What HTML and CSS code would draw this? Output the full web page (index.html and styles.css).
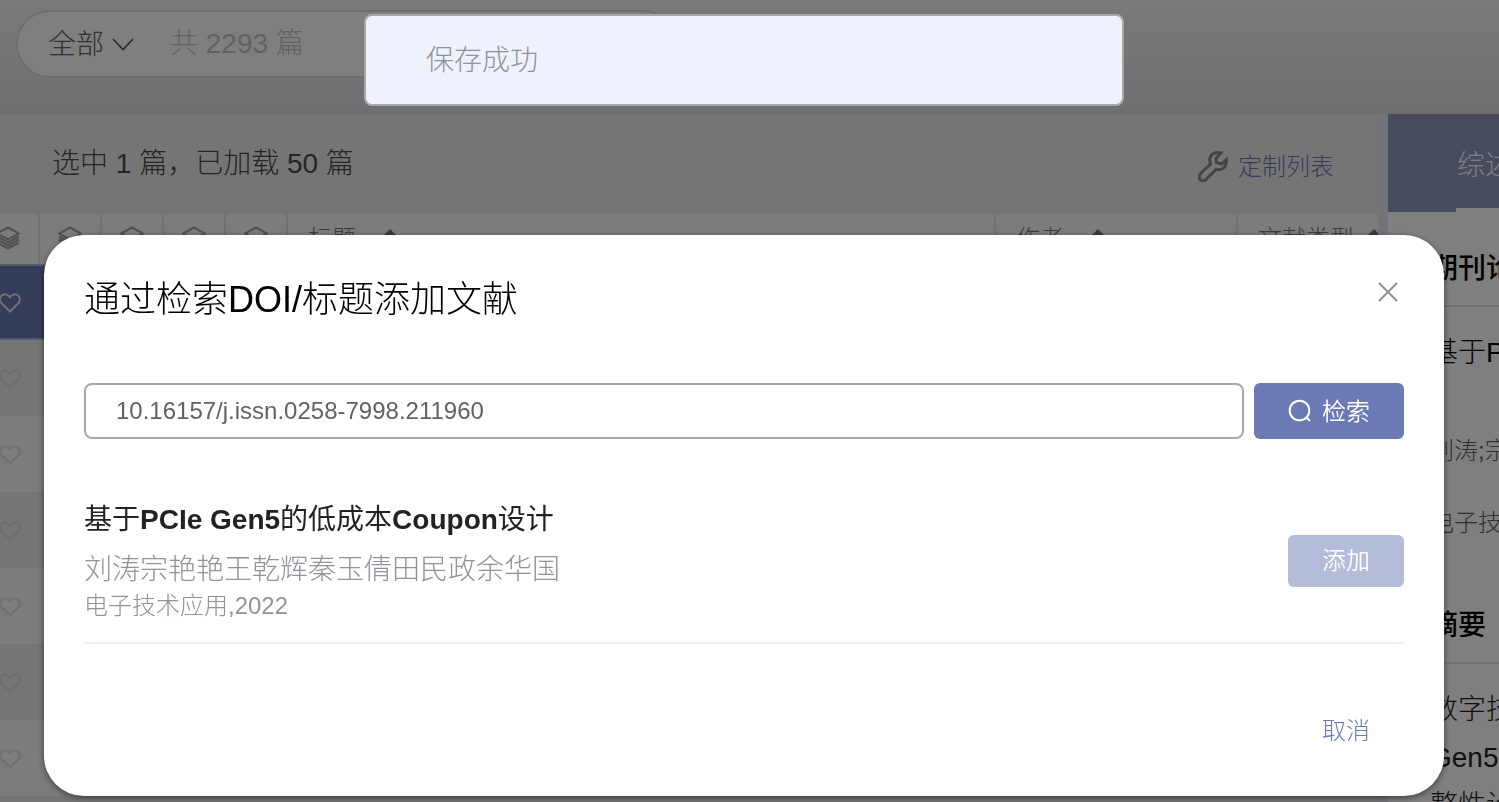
FILE: index.html
```html
<!DOCTYPE html>
<html lang="zh-CN">
<head>
    <meta charset="UTF-8">
    <meta name="viewport" content="width=device-width, initial-scale=1.0">
    <title>添加文献</title>
    <link rel="stylesheet" href="styles.css">
</head>
<body>
    <svg class="symbols" aria-hidden="true">
        <symbol id="layers" viewBox="0 0 24 24">
            <path d="M12 1.5L23 7.5L12 13.5L1 7.5Z" />
            <path d="M1 10.5L12 16.5L23 10.5M1 13.5L12 19.5L23 13.5M1 16.5L12 22.5L23 16.5" />
        </symbol>
        <symbol id="heart" viewBox="0 0 22 20">
            <path d="M11 18.5L2.6 10.2C0.4 7.8 0.6 4.6 2.6 2.7C4.8 0.7 8.2 1 10 3.2L11 4.4L12 3.2C13.8 1 17.2 0.7 19.4 2.7C21.4 4.6 21.6 7.8 19.4 10.2Z" />
        </symbol>
    </svg>

    <header class="top-bar">
        <div class="search-pill">
            <label class="scope">
                <select aria-label="范围">
                    <option>全部</option>
                </select>
                <svg class="chevron" viewBox="0 0 22 13"><path d="M1 1L11 11.5L21 1" /></svg>
            </label>
            <input type="text" class="pill-input" aria-label="搜索" placeholder="共 2293 篇">
        </div>
    </header>

    <main class="content">
        <section class="list">
            <div class="toolbar">
                <span>选中 1 篇，已加载 50 篇</span>
                <a href="#" class="customize">
                    <svg class="wrench" viewBox="0 0 30 31">
                        <path d="M19 1.5C13 2 10.500 7 12.500 13L2.500 22.500C0.500 25 1 27.500 2.500 29C4.500 30.500 6.500 30 8 28.500L18 18.500C24 20 29 16 28.500 8.500L23.500 13L18.500 11.500L18 7.500L23 2Z" />
                    </svg>
                    定制列表
                </a>
            </div>
            <table class="papers">
                <thead>
                    <tr>
                        <th class="icon-col"><svg class="layers"><use href="#layers" /></svg></th>
                        <th class="icon-col"><svg class="layers"><use href="#layers" /></svg></th>
                        <th class="icon-col"><svg class="layers"><use href="#layers" /></svg></th>
                        <th class="icon-col"><svg class="layers"><use href="#layers" /></svg></th>
                        <th class="icon-col"><svg class="layers"><use href="#layers" /></svg></th>
                        <th class="title-col"><div class="th-text">标题<span class="sort"></span></div></th>
                        <th class="author-col"><div class="th-text">作者<span class="sort"></span></div></th>
                        <th><div class="th-text near">文献类型<span class="sort"></span></div></th>
                    </tr>
                </thead>
                <tbody>
                    <tr class="selected"><td><svg class="heart"><use href="#heart" /></svg></td><td colspan="7"></td></tr>
                    <tr><td><svg class="heart"><use href="#heart" /></svg></td><td colspan="7"></td></tr>
                    <tr><td><svg class="heart"><use href="#heart" /></svg></td><td colspan="7"></td></tr>
                    <tr><td><svg class="heart"><use href="#heart" /></svg></td><td colspan="7"></td></tr>
                    <tr><td><svg class="heart"><use href="#heart" /></svg></td><td colspan="7"></td></tr>
                    <tr><td><svg class="heart"><use href="#heart" /></svg></td><td colspan="7"></td></tr>
                    <tr><td><svg class="heart"><use href="#heart" /></svg></td><td colspan="7"></td></tr>
                </tbody>
            </table>
        </section>

        <aside class="detail">
            <div class="tabs"><button class="tab">综述</button></div>
            <h2 class="detail-heading">期刊论文</h2>
            <p class="detail-title">基于PCIe Gen5</p>
            <p class="detail-meta">刘涛;宗艳艳</p>
            <p class="detail-meta">电子技术应用</p>
            <h2 class="detail-heading">摘要</h2>
            <p class="abstract">数字技术<br>Gen5<br>整性设计</p>
        </aside>
    </main>

    <div class="overlay">
        <div class="dialog" role="dialog" aria-labelledby="dialog-title">
            <div class="dialog-header">
                <h1 id="dialog-title">通过检索DOI/标题添加文献</h1>
                <button class="close" aria-label="关闭">
                    <svg viewBox="0 0 20 20"><path d="M1 1L19 19M19 1L1 19" /></svg>
                </button>
            </div>
            <div class="search-row">
                <input type="text" class="doi-input" aria-label="DOI/标题" value="10.16157/j.issn.0258-7998.211960">
                <button class="search-btn">
                    <svg viewBox="0 0 24 24"><circle cx="11.500" cy="11.500" r="9.800" /><path d="M18.500 18.500L22 22" /></svg>
                    检索
                </button>
            </div>
            <div class="result">
                <div class="result-text">
                    <h3>基于<b>PCIe Gen5</b>的低成本<b>Coupon</b>设计</h3>
                    <p class="authors">刘涛宗艳艳王乾辉秦玉倩田民政余华国</p>
                    <p class="journal">电子技术应用,2022</p>
                </div>
                <button class="add-btn" disabled>添加</button>
            </div>
            <div class="dialog-footer">
                <button class="cancel">取消</button>
            </div>
        </div>
        <div class="toast" role="status">保存成功</div>
    </div>
</body>
</html>
```
FILE: styles.css
```css
* {
    box-sizing: border-box;
}
body {
    margin: 0;
    height: 100vh;
    overflow: hidden;
    display: flex;
    flex-direction: column;
    font-family: "Liberation Sans", "Noto Sans CJK SC", sans-serif;
    font-weight: 300;
    font-size: 28px;
    color: #606266;
    background-color: #ebebeb;
}
h1, h2, h3, p {
    margin: 0;
    font-weight: 300;
}
button, input, select {
    font: inherit;
    border: none;
    padding: 0;
    background: none;
}
svg {
    fill: none;
    stroke: currentColor;
    stroke-width: 2;
}
.symbols {
    display: none;
}

/* top search */
.top-bar {
    flex: none;
    height: 114px;
    padding: 10px 16px;
    background: linear-gradient(#f4f4f4, #e0e1e4 90%, #dcdcdc);
}
.search-pill {
    display: flex;
    align-items: center;
    width: 660px;
    height: 68px;
    padding: 0 30px;
    border: 2px solid #dcdcdc;
    border-radius: 34px;
    background-color: #fff;
}
.scope {
    display: flex;
    align-items: center;
    gap: 8px;
    margin-right: 36px;
}
.scope select {
    appearance: none;
    width: 56px;
    color: #606266;
}
.chevron {
    width: 22px;
    height: 13px;
    color: #555;
    stroke-width: 1.6;
}
.pill-input {
    flex: 1;
    min-width: 0;
}
.pill-input::placeholder {
    color: #c0c4cc;
    opacity: 1;
}

/* paper list */
.content {
    flex: 1;
    min-height: 0;
    display: flex;
    gap: 10px;
    background-color: #e6e9f2;
}
.list {
    flex: 1;
    min-width: 0;
    overflow: hidden;
    background-color: #ebebeb;
}
.toolbar {
    display: flex;
    align-items: center;
    justify-content: space-between;
    height: 100px;
    padding: 0 44px 6px 52px;
    color: #484848;
}
.customize {
    display: flex;
    align-items: center;
    gap: 10px;
    padding-top: 6px;
    font-size: 24px;
    color: #6b79b4;
    text-decoration: none;
}
.wrench {
    width: 30px;
    height: 31px;
    margin-top: 4px;
    color: #888;
    stroke-width: 3;
}
.papers {
    table-layout: fixed;
    width: calc(100% + 22px);
    margin-left: -22px;
    border-spacing: 0;
}
.papers th {
    height: 50px;
    padding: 0 0 6px;
    font-size: 24px;
    font-weight: 300;
    text-align: left;
    color: #777;
    background-color: #f8f8f8;
    border-right: 2px solid #e2e2e2;
}
.papers th:last-child {
    border-right: none;
}
.papers .icon-col {
    width: 62px;
    text-align: center;
}
.title-col {
    width: 708px;
}
.author-col {
    width: 242px;
}
.th-text {
    display: flex;
    align-items: center;
    gap: 26px;
    height: 44px;
    padding-left: 20px;
    white-space: nowrap;
}
.th-text.near {
    gap: 12px;
}
.sort {
    margin-bottom: 6px;
    border: 8px solid transparent;
    border-top: none;
    border-bottom: 8px solid #777;
}
.layers {
    display: inline-block;
    vertical-align: middle;
    width: 24px;
    height: 24px;
    color: #a0a0a0;
}
.papers td {
    height: 76px;
    padding: 0 0 2px 2px;
    text-align: center;
    color: #dcdcdc;
    background-color: #f8f8f8;
}
.papers tr:nth-child(even) td {
    background-color: #ececec;
}
.papers .selected td {
    color: #e0e0e0;
    background-color: #6b79b4;
    box-shadow: inset 0 2px #a5b9d2, inset 0 -2px #a5b9d2;
}
.heart {
    display: inline-block;
    vertical-align: middle;
    width: 22px;
    height: 20px;
}

/* detail panel */
.detail {
    flex: none;
    width: 111px;
    overflow: hidden;
    white-space: nowrap;
    color: #303133;
    background-color: #fff;
}
.detail > * {
    padding-left: 42px;
}
.detail .tabs {
    height: 98px;
    padding: 0;
    background:
        linear-gradient(#8d96bc, #8d96bc) left top / 68px 98px no-repeat,
        linear-gradient(#8d96bc, #8d96bc) left top / 100% 94px no-repeat;
}
.tab {
    height: 94px;
    padding: 4px 0 0 69px;
    color: #fff;
}
.detail-heading {
    height: 95px;
    padding-top: 33px;
    font-size: 28px;
    line-height: 48px;
    font-weight: 500;
    color: #000;
    border-bottom: 2px solid #e0e0e0;
}
.detail-title {
    height: 108px;
    padding-top: 22px;
    line-height: 48px;
    color: #000;
}
.detail-meta {
    height: 72px;
    padding-top: 18px;
    font-size: 24px;
    line-height: 36px;
    color: #606266;
}
.detail-meta + .detail-heading {
    margin-top: 10px;
}
.abstract {
    padding-top: 22px;
    line-height: 48px;
    color: #222;
}

/* dialog */
.overlay {
    position: fixed;
    inset: 0;
    display: flex;
    justify-content: center;
    align-items: flex-start;
    padding: 235px 55px 0 44px;
    background-color: rgba(0, 0, 0, 0.5);
}
.dialog {
    flex: 1;
    max-width: 1400px;
    padding: 40px 40px 38px;
    border-radius: 40px;
    background-color: #fff;
    box-shadow: 0 2px 6px rgba(0, 0, 0, 0.5);
}
.dialog-header {
    display: flex;
    justify-content: space-between;
    align-items: flex-start;
    margin-bottom: 58px;
}
.dialog-header h1 {
    font-size: 36px;
    line-height: 50px;
    color: #000;
}
.close {
    width: 32px;
    height: 34px;
}
.close svg {
    display: block;
    width: 20px;
    height: 20px;
    margin: auto;
    color: #909399;
}
.search-row {
    display: flex;
    gap: 10px;
}
.doi-input {
    flex: 1;
    height: 56px;
    padding: 0 30px;
    font-size: 24px;
    color: #606266;
    border: 2px solid #a8a8a8;
    border-radius: 8px;
}
.search-btn {
    display: flex;
    align-items: center;
    justify-content: center;
    gap: 10px;
    width: 150px;
    height: 56px;
    padding-bottom: 4px;
    font-size: 24px;
    font-weight: 350;
    color: #fff;
    background-color: #6b79b4;
    border-radius: 6px;
}
.search-btn svg {
    width: 24px;
    height: 24px;
    margin-top: 4px;
}
.result {
    display: flex;
    align-items: center;
    justify-content: space-between;
    margin-top: 40px;
    padding: 17px 0;
    border-bottom: 2px solid #ebeef5;
}
.result-text {
    padding-bottom: 7px;
}
.result h3 {
    margin-bottom: 2px;
    font-size: 28px;
    line-height: 48px;
    font-weight: 400;
    color: #222;
}
.authors {
    line-height: 48px;
    color: #909399;
}
.journal {
    font-size: 24px;
    line-height: 24px;
    color: #909399;
}
.add-btn {
    width: 116px;
    height: 52px;
    padding-bottom: 4px;
    font-size: 24px;
    font-weight: 350;
    color: #fff;
    background-color: #b5bcd9;
    border-radius: 6px;
}
.dialog-footer {
    display: flex;
    justify-content: flex-end;
    margin-top: 58px;
}
.cancel {
    width: 116px;
    height: 56px;
    padding-bottom: 4px;
    font-size: 24px;
    color: #6b79b4;
}

/* message */
.toast {
    position: absolute;
    top: 14px;
    width: 760px;
    height: 92px;
    padding: 0 60px;
    line-height: 90px;
    color: #909399;
    background-color: #edf2fc;
    border: 2px solid #a8a8a8;
    border-radius: 8px;
}
```
